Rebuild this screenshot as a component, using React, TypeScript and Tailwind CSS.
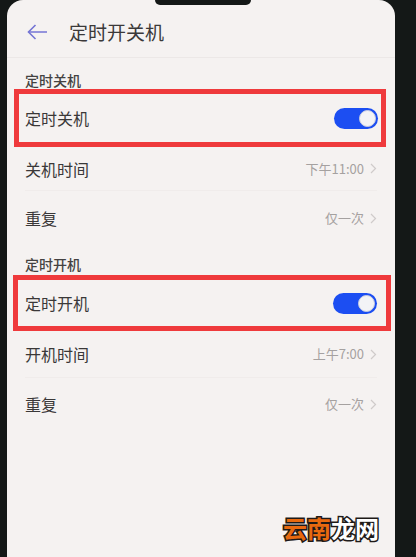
import React from "react";

const font = { fontFamily: '"Noto Sans CJK SC", "Noto Sans", sans-serif' };

function Toggle() {
  return (
    <div className="w-[44px] h-[21px] rounded-full bg-[#1c4ef2] flex items-center justify-end pr-[2px]">
      <div className="w-[17px] h-[17px] rounded-full bg-[#f3f3f6] border border-[#c9cde0]" />
    </div>
  );
}

function Chevron() {
  return (
    <svg width="7" height="11" viewBox="0 0 7 11" className="ml-[6px]">
      <path d="M1 1 L5.5 5.5 L1 10" fill="none" stroke="#cfcbca" strokeWidth="1.2" />
    </svg>
  );
}

function ValueRow({ label, value, h }: { label: string; value: string; h: string }) {
  return (
    <div className={`flex items-center justify-between pl-[18px] pr-[18px] ${h}`}>
      <span className="text-[16px] leading-[20px] text-[#3a3838]">{label}</span>
      <span className="flex items-center text-[13px] leading-[16px] text-[#a5a1a0]">
        {value}
        <Chevron />
      </span>
    </div>
  );
}

export default function App() {
  return (
    <div className="w-[416px] h-[557px] flex bg-[#141817] overflow-hidden" style={font}>
      <div className="w-[7px] shrink-0" />
      <div className="relative w-[388px] h-full shrink-0 bg-[#f5f2f1] rounded-t-[16px] overflow-hidden">
        {/* notch */}
        <div className="absolute left-[148px] top-0 w-[96px] h-[5px] bg-[#141817] rounded-b-[6px]" />

        {/* header */}
        <div className="h-[57px] flex items-center pl-[20px] pt-[6px]">
          <svg width="21" height="16" viewBox="0 0 21 16">
            <path d="M1.5 8 H20" stroke="#7475d4" strokeWidth="1.6" fill="none" />
            <path d="M8.5 1 L1.5 8 L8.5 15" stroke="#7475d4" strokeWidth="1.6" fill="none" />
          </svg>
          <span className="ml-[21px] text-[19px] leading-[24px] text-[#3b3939]">定时开关机</span>
        </div>
        <div className="h-px bg-[#ece8e7]" />

        {/* section 1 */}
        <div className="h-[31px] pt-[15px] pl-[18px]">
          <span className="block text-[14px] leading-[14px] font-medium text-[#444241]">定时关机</span>
        </div>
        <div className="h-[58px] ml-[7px] mr-[9px] border-[5px] border-[#ef3a3c] flex items-center justify-between pl-[6px] pr-[3px]">
          <span className="text-[16px] leading-[20px] text-[#3a3838]">定时关机</span>
          <Toggle />
        </div>
        <ValueRow label="关机时间" value="下午11:00" h="h-[43px]" />
        <div className="h-px mx-[18px] bg-[#f0eceb]" />
        <ValueRow label="重复" value="仅一次" h="h-[54px]" />

        {/* section 2 */}
        <div className="h-[30px] pt-[12px] pl-[18px]">
          <span className="block text-[14px] leading-[14px] font-medium text-[#444241]">定时开机</span>
        </div>
        <div className="h-[56px] ml-[6px] mr-[4px] border-[5px] border-[#ef3a3c] flex items-center justify-between pl-[7px] pr-[9px]">
          <span className="text-[16px] leading-[20px] text-[#3a3838]">定时开机</span>
          <Toggle />
        </div>
        <ValueRow label="开机时间" value="上午7:00" h="h-[46px]" />
        <div className="h-px mx-[18px] bg-[#f0eceb]" />
        <ValueRow label="重复" value="仅一次" h="h-[52px]" />

        {/* watermark */}
        <div className="absolute left-[276px] top-[513px] text-[24px] leading-[30px] font-bold tracking-[0px] [-webkit-text-stroke:3px_#1e1a18] [paint-order:stroke_fill]">
          <span className="text-[#e8690f]">云南</span>
          <span className="text-white">龙网</span>
        </div>
      </div>
      <div className="w-[21px] shrink-0" />
    </div>
  );
}
